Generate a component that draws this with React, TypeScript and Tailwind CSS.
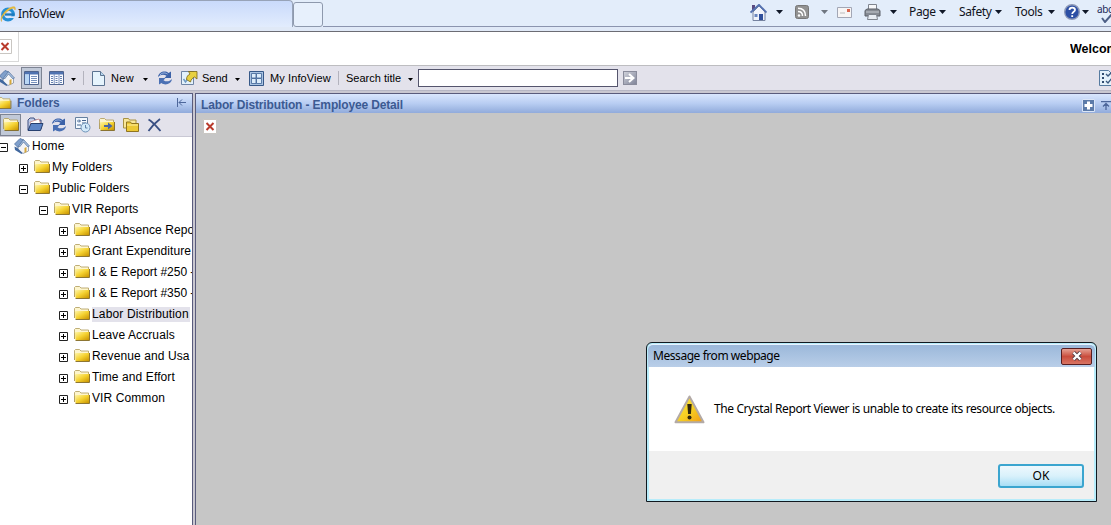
import type { ReactNode } from "react";

const ui = "font-['Noto_Sans','Open_Sans',sans-serif]";
const arial = "font-['Liberation_Sans',Arial,sans-serif]";

function Cell({ w, children }: { w: string; children?: ReactNode }) {
  return <div className={`flex h-full shrink-0 items-center whitespace-nowrap ${w}`}>{children}</div>;
}

function Arrow({ big, dim }: { big?: boolean; dim?: boolean }) {
  return big ? (
    <svg width="7" height="4" viewBox="0 0 7 4"><path d="M0 0h7L3.5 4z" fill={dim ? "#6f7680" : "#101828"} /></svg>
  ) : (
    <svg width="5" height="3" viewBox="0 0 5 3" className="mt-0.5"><path d="M0 0h5L2.5 3z" fill="#000" /></svg>
  );
}

function Folder({ className = "" }: { className?: string }) {
  return (
    <svg width="16" height="13" viewBox="0 0 16 13" className={`shrink-0 ${className}`}>
      <defs>
        <linearGradient id="folder" x1="0" y1="0" x2="1" y2="1">
          <stop offset="0" stopColor="#fff6a8" />
          <stop offset=".5" stopColor="#f5d231" />
          <stop offset="1" stopColor="#c99400" />
        </linearGradient>
      </defs>
      <path d="M.5 11V1.500L1.500.5H5.500L7 2h7.500v3H1z" fill="#fdf5cd" stroke="#ae9a58" strokeWidth=".8" />
      <path d="M1 4h14v8H1.500z" fill="url(#folder)" />
      <path d="M1.500 12.500h14V4" fill="none" stroke="#80661c" strokeWidth=".9" />
    </svg>
  );
}

function Refresh() {
  return (
    <svg width="16" height="14" viewBox="0 0 16 14">
      <path d="M1 6C1.500 1 8-1 11.500 2L14 .5V7H7.500L9.500 4.800C6.500 2.800 3.500 3.500 1 6z" fill="#3c62a8" />
      <path d="M15 8c-.5 5-7 7-10.500 4L2 13.500V7h6.500L6.500 9.200C9.500 11.200 12.500 10.500 15 8z" fill="#4a70b4" />
      <path d="M3 4C5 1.500 8 1.500 10.500 3" stroke="#a9c2ea" fill="none" />
    </svg>
  );
}

function HomeIcon() {
  return (
    <svg width="16" height="16" viewBox="0 0 16 16" className="shrink-0">
      <path d="M4 8l5-5 5.500 5v5L9 15.500 4 12z" fill="#f4f4f6" stroke="#7d8798" strokeWidth=".7" />
      <path d="M.5 6L6 .5l4 1.500-6 7.500z" fill="#7f9fcb" stroke="#466998" strokeWidth=".7" />
      <path d="M9 2l1 0 5.500 6-1.500 1-4.500-5-4 5-1-1z" fill="#a8c0e0" stroke="#56739c" strokeWidth=".7" />
      <path d="M.5 8.500l3 1.500 5 5-1 1-6.500-4z" fill="#41689f" />
      <path d="M10.500 10l2-1v5l-2 1z" fill="#d6a83c" />
    </svg>
  );
}

function BrokenImage() {
  return (
    <svg width="14" height="15" viewBox="0 0 14 15">
      <path d="M.5.5h13v14H.5z" fill="#fff" stroke="#c9c6c2" />
      <path d="M3.500 4l7 7m0-7l-7 7" stroke="#b93a2b" strokeWidth="2" />
    </svg>
  );
}

function IELogo() {
  return (
    <svg width="16" height="16" viewBox="0 0 16 16">
      <circle cx="8" cy="8.500" r="5.300" fill="none" stroke="#248fd6" strokeWidth="3.200" />
      <path d="M5 8.500h9.500" stroke="#1c79bd" strokeWidth="2.300" />
      <path d="M10 10.300h6v1.700h-6z" fill="#dbe7fb" />
      <path d="M1.500 15.500C-1 12 5 3 12 1c3-.8 4 .5 3 3-.2-2-2-2.200-4-1C6 5.500 1 11 1.500 15.500z" fill="#efc43f" stroke="#c99a25" strokeWidth=".4" />
    </svg>
  );
}

function BrowserBar() {
  return (
    <div className={`flex h-8 flex-col bg-[#e3edfa] text-[12px] tracking-[-0.35px] text-[#10131c] ${ui}`}>
      <div className="flex h-[27px]">
        <div className="flex w-[293px] shrink-0 items-center rounded-tr-sm border-t border-r border-[#97a3b8] bg-gradient-to-b from-[#c9dafb] to-[#e2ecfd]">
          <div className="flex w-[18px] items-center"><IELogo /></div>
          <span>InfoView</span>
        </div>
        <div className="mt-0.5 h-[25px] w-[30px] shrink-0 rounded-[3px] border border-[#8e99ad] bg-[#e7f0fc]" />
        <div className="flex min-w-0 flex-1 items-center overflow-hidden border-b border-[#8b94ae] pb-0.5">
          <Cell w="w-[427px]" />
          <Cell w="w-[26px]">
            <svg width="17" height="17" viewBox="0 0 17 17">
              <path d="M2 1h3v6H2z" fill="#5a4a80" />
              <path d="M3 8l6-6 6 6v8.500H3z" fill="#f0f3fb" stroke="#7683a0" />
              <path d="M.5 8.500L9 .8l7.500 7.700" fill="none" stroke="#5571b0" strokeWidth="1.800" />
              <path d="M9 10h4v6H9z" fill="#2f4f9c" /><path d="M4.500 10h3v3h-3z" fill="#6a86be" />
            </svg>
          </Cell>
          <Cell w="w-[19px]"><Arrow big /></Cell>
          <Cell w="w-[26px]">
            <svg width="14" height="14" viewBox="0 0 14 14">
              <rect x=".5" y=".5" width="13" height="13" rx="2" fill="#929292" stroke="#777" />
              <circle cx="4" cy="10.500" r="1.200" fill="#fff" />
              <path d="M3 6.500c3 0 4.500 2 4.500 4.500M3 3.200c5 0 7.500 3.300 7.500 7.800" fill="none" stroke="#fff" strokeWidth="1.500" />
            </svg>
          </Cell>
          <Cell w="w-4"><Arrow big dim /></Cell>
          <Cell w="w-[27px]">
            <svg width="15" height="11" viewBox="0 0 15 11">
              <path d="M.5.5h14v10H.5z" fill="#f7f5f5" stroke="#a3a7b5" />
              <path d="M10 2h3v3h-3z" fill="#d9654e" /><path d="M3 6h5" stroke="#bbb" />
            </svg>
          </Cell>
          <Cell w="w-[26px]">
            <svg width="17" height="16" viewBox="0 0 17 16">
              <path d="M4.500.5h8V6h-8z" fill="#f7f8fa" stroke="#7e848e" />
              <path d="M1 6.500L3 5h11l2 1.500V12H1z" fill="#858a92" stroke="#5c6169" />
              <path d="M2 8h13" stroke="#c6cad1" />
              <path d="M4.500 10.500h8l1 5h-10z" fill="#e7ecf3" stroke="#7e848e" />
            </svg>
          </Cell>
          <Cell w="w-[19px]"><Arrow big /></Cell>
          <Cell w="w-[30px]">Page</Cell>
          <Cell w="w-5"><Arrow big /></Cell>
          <Cell w="w-9">Safety</Cell>
          <Cell w="w-5"><Arrow big /></Cell>
          <Cell w="w-[33px]">Tools</Cell>
          <Cell w="w-4"><Arrow big /></Cell>
          <Cell w="w-[18px]">
            <svg width="16" height="16" viewBox="0 0 16 16">
              <circle cx="8" cy="8" r="7.300" fill="#2c4fa5" stroke="#8e9ab8" strokeWidth="1.400" />
              <path d="M5.500 6C5.500 2.800 11 2.800 11 6c0 1.800-2.800 1.800-2.800 4M8.200 11.200v1.800" fill="none" stroke="#fff" strokeWidth="1.800" />
            </svg>
          </Cell>
          <Cell w="w-[15px]"><Arrow big /></Cell>
          <div className="flex shrink-0 flex-col pt-1 text-[10px] leading-[9px] text-[#1d2a58]">
            <span>abc</span>
            <svg width="14" height="9" viewBox="0 0 14 9" className="ml-1"><path d="M1 4l3 4 7-8" stroke="#4d5f86" strokeWidth="2" fill="none" /></svg>
          </div>
        </div>
      </div>
      <div className="flex-1 border-b border-[#6c6c74] bg-[#e0e9f7]" />
    </div>
  );
}

function Banner() {
  return (
    <div className={`flex h-[34px] justify-between border-b border-[#bdbdc0] bg-white ${arial}`}>
      <div className="flex h-[30px] w-[19px] items-center border-r border-b border-[#d9d9d9]">
        <div className="-ml-0.5 flex"><BrokenImage /></div>
      </div>
      <div className="w-[41px] overflow-hidden pt-2 text-[12.5px] leading-[18px] font-bold whitespace-nowrap text-black">Welcome:</div>
    </div>
  );
}

function ListIcon({ cols }: { cols?: boolean }) {
  return (
    <svg width="15" height="14" viewBox="0 0 15 14">
      <path d="M.5.5h14v13H.5z" fill="#fbfcff" stroke="#4f648e" />
      <path d="M1 1h13v2.500H1z" fill="#4f73b1" />
      {cols ? (
        <>
          <path d="M5.200 3v10M10 3v10" stroke="#7c93bd" />
          <path d="M2 5.500h2M2 7.500h2M2 9.500h2M2 11.500h2M6.500 5.500h2M6.500 7.500h2M6.500 9.500h2M6.500 11.500h2M11 5.500h2M11 7.500h2M11 9.500h2M11 11.500h2" stroke="#6681b0" />
        </>
      ) : (
        <>
          <path d="M1 3.500h4.500V13H1z" fill="#b9d7f5" />
          <path d="M5.500 3v10" stroke="#4f73b1" />
          <path d="M7 5.500h6M7 7.500h6M7 9.500h6M7 11.500h6" stroke="#7691bd" />
        </>
      )}
    </svg>
  );
}

function Toolbar() {
  return (
    <div className={`flex h-[25px] items-center overflow-hidden border-b border-[#b6b6c4] bg-[#e3e2eb] text-[11px] text-black ${arial}`}>
      <Cell w="w-[21px]"><div className="-ml-px"><HomeIcon /></div></Cell>
      <Cell w="w-7">
        <div className="flex h-[22px] w-[21px] items-center justify-center border border-[#7d8493] bg-[#c1c9d8]"><ListIcon /></div>
      </Cell>
      <Cell w="w-[22px]"><ListIcon cols /></Cell>
      <Cell w="w-3"><Arrow /></Cell>
      <Cell w="w-[9px]"><i className="h-[14px] w-px bg-[#b3b3bd]" /></Cell>
      <Cell w="w-[19px]">
        <svg width="13" height="15" viewBox="0 0 13 15"><path d="M.5.5h8l4 4v10H.5z" fill="#e6f4fd" stroke="#5b7391" /><path d="M8.500.5v4h4" fill="#b5d6ee" stroke="#5b7391" /></svg>
      </Cell>
      <Cell w="w-8"><span className="tracking-[0.3px]">New</span></Cell>
      <Cell w="w-3.5"><Arrow /></Cell>
      <Cell w="w-6"><Refresh /></Cell>
      <Cell w="w-[21px]">
        <svg width="17" height="16" viewBox="0 0 17 16">
          <path d="M.5 1.500h12v13H.5z" fill="#e3f1fb" stroke="#6e84a5" /><path d="M2.500 9l2 3 3-4" fill="none" stroke="#6f9ac2" strokeWidth="1.500" />
          <path d="M5.500 9.500c0-3 1.500-4.500 3.500-5.500L7.500 1.500H16v7.500l-2.500-2C11.500 8 10 9.500 9.500 12z" fill="#e8d040" stroke="#776314" strokeWidth=".8" />
        </svg>
      </Cell>
      <Cell w="w-[33px]">Send</Cell>
      <Cell w="w-[14px]"><Arrow /></Cell>
      <Cell w="w-[21px]">
        <svg width="15" height="15" viewBox="0 0 15 15"><path d="M.5.5h14v14H.5z" fill="#a9c3e2" stroke="#365888" /><path d="M2.500 2.500H7V7H2.500zM7.500 2.500h5V7h-5zM2.500 7.500H7v5H2.500zM7.500 7.500h5v5h-5z" fill="#dcecfa" stroke="#3f6396" strokeWidth=".8" /></svg>
      </Cell>
      <Cell w="w-[68px]"><span className="tracking-[0.1px]">My InfoView</span></Cell>
      <Cell w="w-2"><i className="h-[14px] w-px bg-[#b3b3bd]" /></Cell>
      <Cell w="w-[62px]">Search title</Cell>
      <Cell w="w-2.5"><Arrow /></Cell>
      <input aria-label="Search" className="h-[18px] w-[200px] shrink-0 border border-[#55556d] bg-white px-1 outline-none" />
      <div className="ml-[5px] flex h-[14px] w-[14px] shrink-0 items-center justify-center border border-[#8a8c9c] bg-gradient-to-br from-[#cfd1da] to-[#82869a]">
        <svg width="10" height="10" viewBox="0 0 10 10"><path d="M0 5h7M4 1l4.500 4L4 9" fill="none" stroke="#fff" strokeWidth="2" /></svg>
      </div>
      <div className="ml-auto w-3 shrink-0 overflow-hidden">
        <svg width="16" height="16" viewBox="0 0 16 16">
          <path d="M.5.5h9l4 4v11H.5z" fill="#e4f1fa" stroke="#567ba0" />
          <path d="M3 3h2v2H3zM3 7h2v2H3zM3 11h2v2H3z" fill="#2f4c70" />
          <path d="M7 4l2 2 4-4M7 11l2 2 4-5" fill="none" stroke="#38587e" strokeWidth="1.300" />
        </svg>
      </div>
    </div>
  );
}

const panelHead = "border-t border-[#595b7c] bg-gradient-to-b from-[#d9e6fd] via-[#b8cdf2] to-[#91abdb] text-[#3c5a92]";

type Node = { level: number; label: string; open?: boolean; home?: boolean; selected?: boolean; tight?: boolean };
const nodes: Node[] = [
  { level: 0, label: "Home", open: true, home: true },
  { level: 1, label: "My Folders" },
  { level: 1, label: "Public Folders", open: true },
  { level: 2, label: "VIR Reports", open: true },
  { level: 3, label: "API Absence Repo" },
  { level: 3, label: "Grant Expenditure" },
  { level: 3, label: "I & E Report #250 -", tight: true },
  { level: 3, label: "I & E Report #350 -", tight: true },
  { level: 3, label: "Labor Distribution", selected: true },
  { level: 3, label: "Leave Accruals" },
  { level: 3, label: "Revenue and Usa" },
  { level: 3, label: "Time and Effort" },
  { level: 3, label: "VIR Common" },
];
const indents = ["-ml-px", "ml-[19px]", "ml-[39px]", "ml-[59px]"];

function TreeRow({ node }: { node: Node }) {
  const tracking = node.selected ? "bg-[#e3e2eb] pr-px tracking-[0.15px]" : node.tight ? "tracking-[-0.02px]" : "tracking-[0.1px]";
  return (
    <div className="flex h-[21px] items-center overflow-hidden whitespace-nowrap">
      <svg width="9" height="9" viewBox="0 0 9 9" className={`mt-px shrink-0 ${indents[node.level]}`}>
        <path d="M.5.5h8v8h-8z" fill="#fff" stroke="#222" />
        <path d={node.open ? "M2 4.500h5" : "M2 4.500h5M4.500 2v5"} stroke="#000" />
      </svg>
      <span className="-mt-0.5 ml-1.5 w-[18px] shrink-0">{node.home ? <HomeIcon /> : <Folder />}</span>
      <span className={`h-[15px] leading-[15px] ${tracking}`}>{node.label}</span>
    </div>
  );
}

function Sidebar() {
  return (
    <aside className={`flex w-[193px] shrink-0 flex-col border-r border-[#595b7c] bg-white ${arial}`}>
      <div className={`flex h-5 items-center ${panelHead}`}>
        <Folder className="-mt-0.5 -ml-1 h-3" />
        <span className="-mt-0.5 ml-[5px] text-[12px] font-bold tracking-[-0.1px]">Folders</span>
        <svg width="9" height="9" viewBox="0 0 9 9" className="-mt-0.5 mr-1.5 ml-auto"><path d="M.5 0v9M2 4.500h7M5 1.500l-3 3 3 3" fill="none" stroke="#4d679b" /></svg>
      </div>
      <div className="flex h-6 items-center border-b border-[#c9c8d4] bg-[#e3e2eb]">
        <Cell w="w-[27px]"><div className="flex h-[22px] w-[21px] items-center justify-center border border-[#7d8493] bg-[#c1c9d8]"><Folder /></div></Cell>
        <Cell w="w-6">
          <svg width="17" height="15" viewBox="0 0 17 15"><path d="M1 13V3l2-2h4l1 2h6v9z" fill="#c0cce8" stroke="#3c4f80" /><path d="M3 5l9-3 2 6H4z" fill="#fff" stroke="#c07a7a" strokeWidth=".7" /><path d="M1 13.500L4 6.500h12l-2.500 7z" fill="#5d85c6" stroke="#27406f" /></svg>
        </Cell>
        <Cell w="w-6"><Refresh /></Cell>
        <Cell w="w-6">
          <svg width="16" height="16" viewBox="0 0 16 16"><path d="M.5.5h12v11H.5z" fill="#f3f9ff" stroke="#66809f" /><path d="M2 4h3M4 2.500L5.500 4 4 5.500M7 3.500h4M7 6h4M2 8h4" fill="none" stroke="#45648f" /><circle cx="10.500" cy="10.500" r="4.500" fill="#d3eafa" stroke="#6e92b8" /><path d="M10.500 8v3h2" fill="none" stroke="#5d80a8" /></svg>
        </Cell>
        <Cell w="w-6">
          <div className="grid"><Folder className="col-start-1 row-start-1" /><svg width="16" height="13" viewBox="0 0 16 13" className="col-start-1 row-start-1"><path d="M5 7h4V4.500L13.500 8 9 11.500V9H5z" fill="#4b67a4" /></svg></div>
        </Cell>
        <Cell w="w-6">
          <svg width="16" height="16" viewBox="0 0 16 16"><path d="M.5 11V1.500h5l1 1.500H13v8z" fill="#f8e79a" stroke="#a89243" /><path d="M3.500 14.500V5h4l1 1.500h7v8z" fill="#ecc936" stroke="#8f7421" /><path d="M4 8h11" stroke="#fff0a1" /></svg>
        </Cell>
        <svg width="15" height="14" viewBox="0 0 15 14"><path d="M1.500 1.500C6 4 9 8 13.500 13M13 1C9 4 5 8 1.500 13" fill="none" stroke="#384f83" strokeWidth="1.800" /></svg>
      </div>
      <div className="-mt-px flex flex-col overflow-hidden text-[12px] text-black">
        {nodes.map((n) => <TreeRow key={n.label} node={n} />)}
      </div>
    </aside>
  );
}

function Dialog() {
  return (
    <div role="dialog" className={`absolute top-[249px] left-[450px] flex h-[160px] w-[451px] flex-col rounded-t-md border border-[#10181f] bg-[#b7ecfa] p-px text-[12px] text-black ${ui}`}>
      <div className="flex h-[23px] shrink-0 items-center justify-between rounded-t-[5px] border-t border-[#e8f3ff] bg-gradient-to-b from-[#9bb8da] to-[#b9cee8] pr-[3px] pl-[5px]">
        <span className="tracking-[-0.44px]">Message from webpage</span>
        <button className="flex h-[17px] w-[31px] items-center justify-center rounded-[2px] border border-[#571d1f] bg-gradient-to-b from-[#e4a093] via-[#c94c3c] to-[#d97463]">
          <svg width="12" height="10" viewBox="0 0 12 10"><path d="M2.500 1.500l7 7m0-7l-7 7" stroke="#534049" strokeWidth="4" /><path d="M2.500 1.500l7 7m0-7l-7 7" stroke="#fff" strokeWidth="2.400" /></svg>
        </button>
      </div>
      <div className="mr-px ml-px flex h-[84px] shrink-0 items-center bg-white pl-[25px]">
        <svg width="31" height="29" viewBox="0 0 31 29">
          <defs><linearGradient id="warn" x1="0" x2="1" y2="1"><stop offset="0" stopColor="#fff04a" /><stop offset=".55" stopColor="#f6ce22" /><stop offset="1" stopColor="#f29a14" /></linearGradient></defs>
          <path d="M15.500 1.500L29.500 27.300h-28z" fill="url(#warn)" stroke="#b3aaa6" strokeWidth="2" strokeLinejoin="round" />
          <path d="M13.300 9h4.400l-.8 10h-2.800z" fill="#30270c" /><circle cx="15.500" cy="22.500" r="2" fill="#30270c" />
        </svg>
        <span className="ml-[9px] tracking-[-0.39px] whitespace-nowrap">The Crystal Report Viewer is unable to create its resource objects.</span>
      </div>
      <div className="mx-px mb-px flex flex-1 justify-end bg-[#f0f0f0] pt-[13px] pr-[10px]">
        <button className="flex h-[24px] w-[86px] items-center justify-center rounded-[3px] border-2 border-[#3ba5cf] bg-gradient-to-b from-[#eef8fd] via-[#d9f1fb] to-[#a8def5]">OK</button>
      </div>
    </div>
  );
}

export default function App() {
  return (
    <div className="flex h-[525px] w-[1111px] flex-col overflow-hidden bg-white">
      <BrowserBar />
      <Banner />
      <Toolbar />
      <div className="flex min-h-0 flex-1 bg-[#c9c7d0] pt-0.5">
        <Sidebar />
        <main className="relative ml-0.5 flex flex-1 flex-col border-l border-[#595b7c] bg-[#c6c6c6]">
          <div className={`flex h-5 items-center justify-between pl-[5px] ${arial} ${panelHead}`}>
            <h1 className="pt-[3px] text-[12px] font-bold tracking-[-0.15px]">Labor Distribution - Employee Detail</h1>
            <div className="flex items-center gap-1.5 pt-1">
              <svg width="13" height="13" viewBox="0 0 13 13"><path d="M.5.5h12v12H.5z" fill="#5c7ba9" stroke="#dae5f7" /><path d="M6.500 2.500v8M2.500 6.500h8" stroke="#fff" strokeWidth="3" /></svg>
              <svg width="10" height="9" viewBox="0 0 10 9"><path d="M0 .5h10M5 9V3M2 5.500L5 2.500l3 3" fill="none" stroke="#4d679b" strokeWidth="1.300" /></svg>
            </div>
          </div>
          <div className="pt-1.5 pl-[7px]"><BrokenImage /></div>
          <Dialog />
        </main>
      </div>
    </div>
  );
}
